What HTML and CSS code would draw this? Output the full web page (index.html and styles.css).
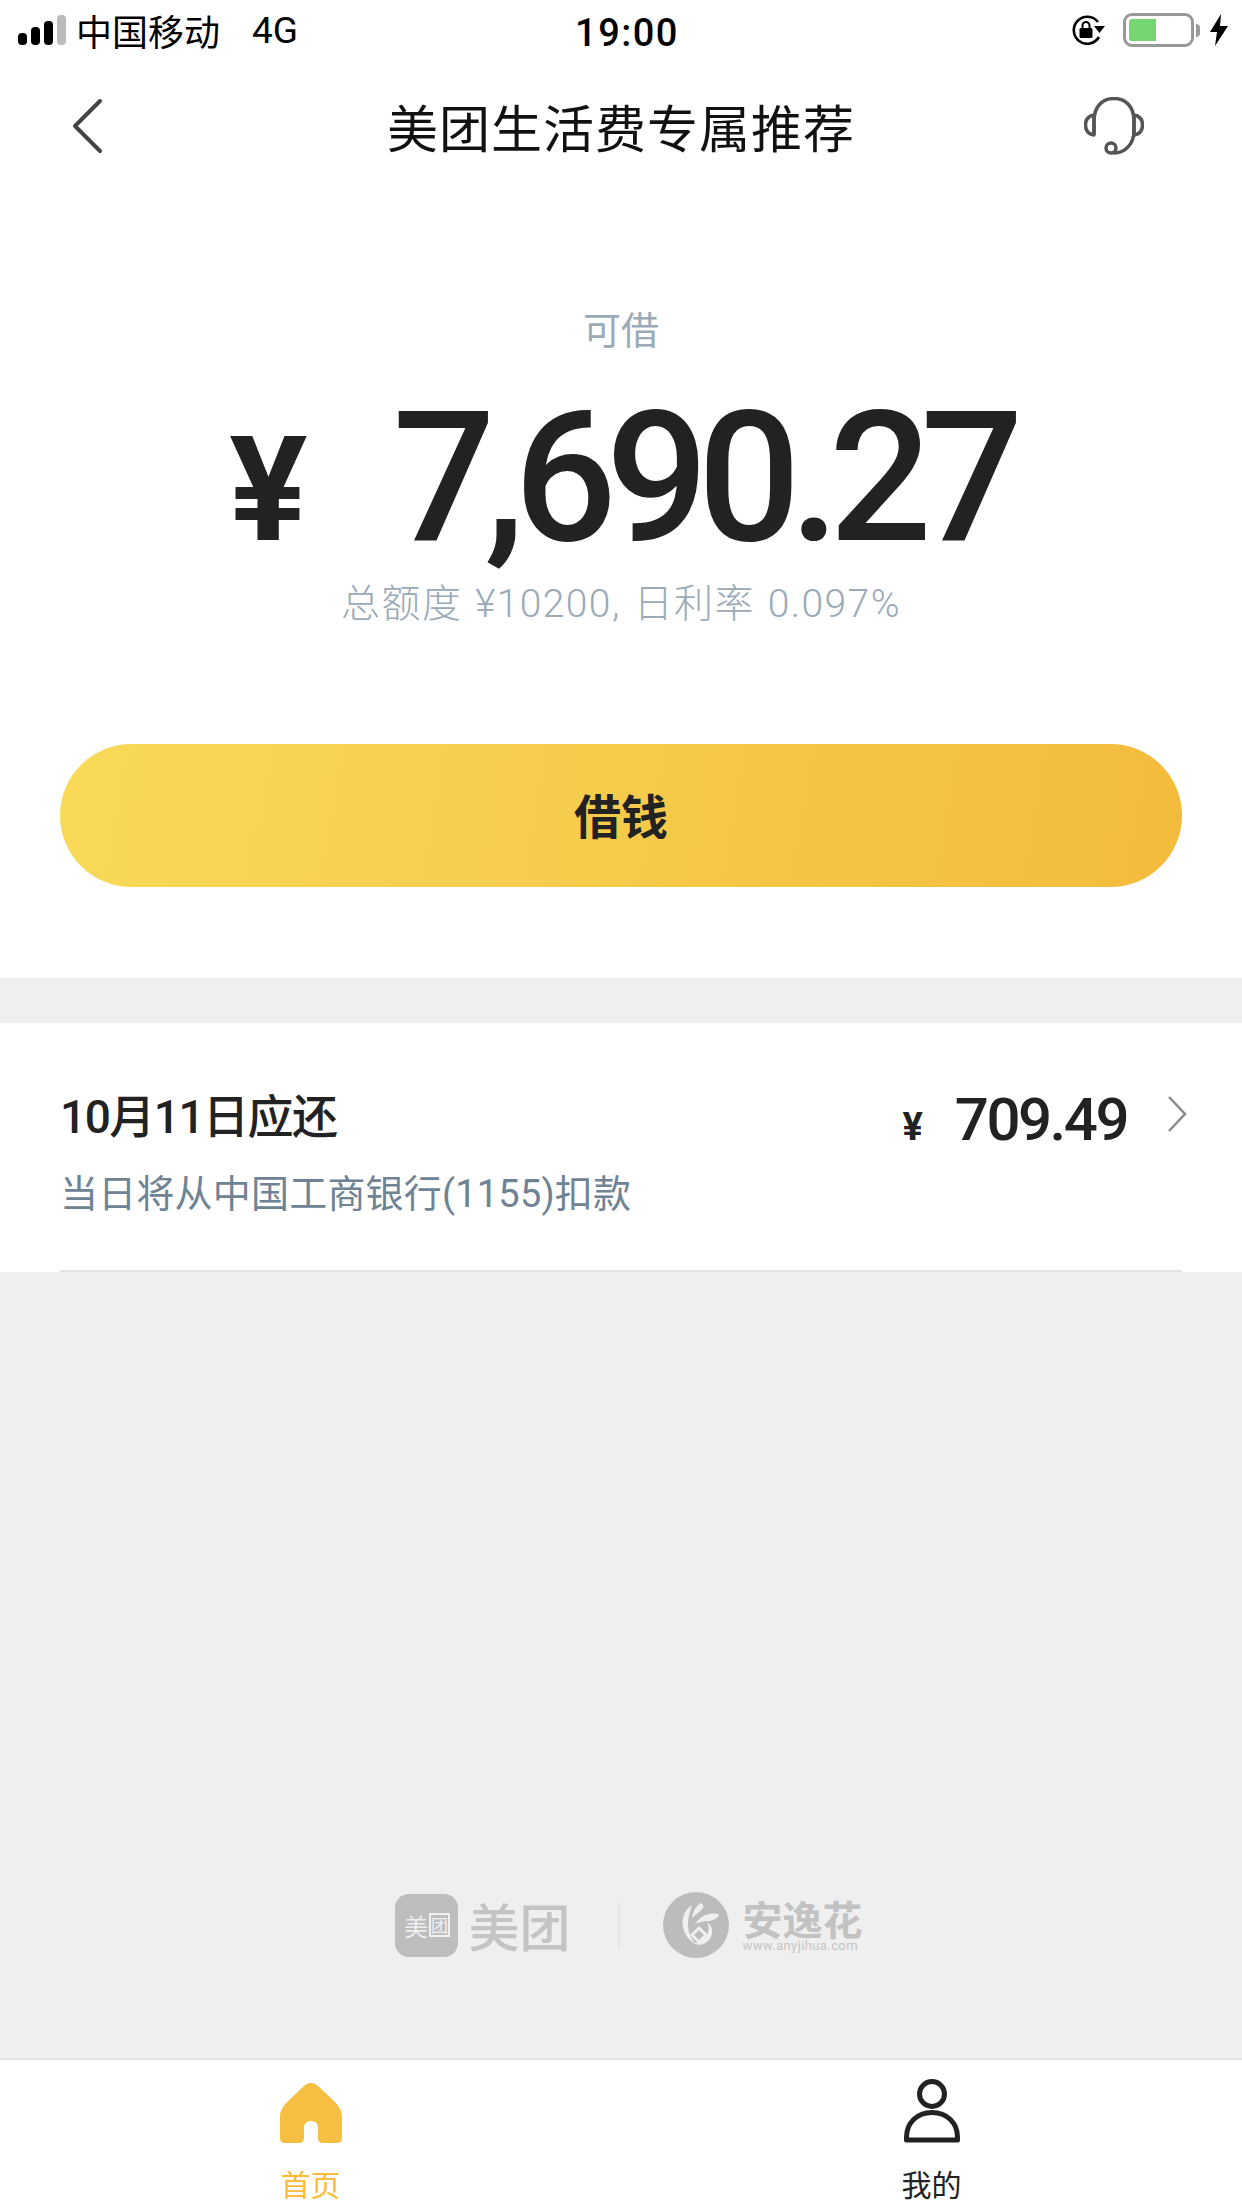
FILE: index.html

```html
<!DOCTYPE html>
<html lang="zh-CN">
<head>
  <meta charset="UTF-8">
  <meta name="viewport" content="width=device-width, initial-scale=1.0">
  <title>美团生活费专属推荐</title>
  <link rel="stylesheet" href="styles.css">
</head>
<body>
  <div class="status-bar">
    <div class="status-left">
      <div class="signal">
        <span class="bar bar-1"></span>
        <span class="bar bar-2"></span>
        <span class="bar bar-3"></span>
        <span class="bar bar-4"></span>
      </div>
      <span class="carrier">中国移动</span>
      <span class="network">4G</span>
    </div>
    <div class="time">19:00</div>
    <div class="status-right">
      <svg class="rotate-lock" viewBox="0 0 34 30" width="34" height="30">
        <path d="M27 7A13.500 13.500 0 1 0 28 22" fill="none" stroke="#000" stroke-width="2.600"/>
        <path d="M23 11h11l-5.500 7z" fill="#000"/>
        <rect x="8.500" y="13" width="13" height="10" rx="1.500" fill="#000"/>
        <path d="M11.500 14V10.500a3.500 3.500 0 0 1 7 0V14" fill="none" stroke="#000" stroke-width="2"/>
      </svg>
      <div class="battery">
        <div class="battery-body"><div class="battery-fill"></div></div>
        <div class="battery-nub"></div>
      </div>
      <svg class="bolt" viewBox="0 0 18 32" width="18" height="32">
        <path d="M11 0L0 18h7L5 32 18 12h-8z" fill="#000"/>
      </svg>
    </div>
  </div>

  <div class="nav">
    <svg class="back" viewBox="0 0 32 56" width="32" height="56">
      <path d="M29 3L4 28l25 25" fill="none" stroke="#444" stroke-width="4" stroke-linecap="round" stroke-linejoin="round"/>
    </svg>
    <h1>美团生活费专属推荐</h1>
    <svg class="headset" viewBox="0 0 60 58" width="60" height="58">
      <path d="M10 36V24C10 10 18 1.500 30 1.500S50 10 50 24v10C50 47 41 56 30 56" fill="none" stroke="#555" stroke-width="3.500" stroke-linecap="round"/>
      <path d="M10 18C4 19 1.500 23 1.500 28S4 37 10 38z" fill="none" stroke="#555" stroke-width="3.500" stroke-linejoin="round"/>
      <path d="M50 18c6 1 8.500 5 8.500 10S56 37 50 38z" fill="none" stroke="#555" stroke-width="3.500" stroke-linejoin="round"/>
      <circle cx="27" cy="51" r="5" fill="none" stroke="#555" stroke-width="3.500"/>
    </svg>
  </div>

  <div class="hero">
    <div class="hero-label">可借</div>
    <div class="hero-amount"><span class="yen">¥</span><span class="digits">7,690.27</span></div>
    <div class="hero-sub">总额度 ¥10200, 日利率 0.097%</div>
    <button class="borrow">借钱</button>
  </div>

  <div class="gap"></div>

  <div class="repay">
    <div class="repay-inner">
      <div class="repay-text">
        <div class="repay-date">10月11日应还</div>
        <div class="repay-note">当日将从中国工商银行(1155)扣款</div>
      </div>
      <div class="repay-amount">
        <span class="repay-yen">¥</span>
        <span class="repay-num">709.49</span>
        <svg class="chevron" viewBox="0 0 20 36" width="20" height="36">
          <path d="M2 1l16 17L2 35" fill="none" stroke="#8a8a8a" stroke-width="2.500"/>
        </svg>
      </div>
    </div>
  </div>

  <div class="filler">
    <div class="brands">
      <div class="mt-app"><span>美</span><span class="mt-box">团</span></div>
      <div class="mt-word">美团</div>
      <div class="brand-line"></div>
      <svg class="ayh-logo" viewBox="0 0 66 66" width="66" height="66">
        <circle cx="33" cy="33" r="33" fill="#bcbcbc"/>
        <path d="M29 13c-7 5-11 13-9 22 1 7 6 13 12 17-4-6-7-12-7-19 0-8 2-14 4-20z" fill="#f0f0f0"/>
        <path d="M38 11c-5 3-8 8-9 15 3-3 8-6 11-10 1-2 0-4-2-5z" fill="#f0f0f0"/>
        <path d="M56 22c-9-2-18 1-24 10 6-3 11-3 15-3 4-1 8-3 9-7z" fill="#f0f0f0"/>
        <path d="M44 30c6 4 7 12 2 18-4 5-11 6-16 3 7 0 13-4 15-10 1-4 1-8-1-11z" fill="#f0f0f0"/>
        <path d="M36 36l7 7-7 7-7-7z" fill="none" stroke="#f0f0f0" stroke-width="3"/>
      </svg>
      <div class="ayh-word">
        <div class="ayh-name">安逸花</div>
        <div class="ayh-url">www.anyjihua.com</div>
      </div>
    </div>
  </div>

  <div class="tabbar">
    <div class="tab tab-active">
      <svg viewBox="0 0 62 60" width="62" height="60">
        <path fill-rule="evenodd" fill="#f7bf42" d="M31 0c-3 0-5 1-7 3L8 18C3 23 0 28 0 34v21c0 3 2 5 5 5h14c3 0 5-2 5-5V45c0-5 3-7 7-7s7 2 7 7v10c0 3 2 5 5 5h14c3 0 5-2 5-5V34c0-6-3-11-8-16L38 3c-2-2-4-3-7-3z"/>
      </svg>
      <span>首页</span>
    </div>
    <div class="tab">
      <svg viewBox="0 0 56 64" width="56" height="64">
        <circle cx="28" cy="15" r="12.500" fill="none" stroke="#222" stroke-width="5"/>
        <path d="M2.500 61V58C2.500 44 13 33.500 28 33.500S53.500 44 53.500 58v3z" fill="none" stroke="#222" stroke-width="5" stroke-linejoin="round"/>
      </svg>
      <span>我的</span>
    </div>
  </div>
</body>
</html>
```

FILE: styles.css

```css
* {
  box-sizing: border-box;
}
body {
  margin: 0;
  width: 1242px;
  height: 2208px;
  display: flex;
  flex-direction: column;
  background-color: #fff;
  color: #222;
  font-family: Roboto, "Noto Sans CJK SC", sans-serif;
  overflow: hidden;
}

/* status bar */
.status-bar {
  height: 60px;
  padding: 0 14px 0 18px;
  display: grid;
  grid-template-columns: 1fr auto 1fr;
  align-items: center;
  color: #000;
  font-size: 37px;
}
.status-left {
  display: flex;
  align-items: center;
}
.signal {
  display: flex;
  align-items: flex-end;
  gap: 4px;
  height: 30px;
  margin-right: 10px;
}
.bar {
  width: 9px;
  background-color: #000;
  border-radius: 4px;
}
.bar-1 { height: 12px; }
.bar-2 { height: 18px; }
.bar-3 { height: 24px; }
.bar-4 { height: 30px; background-color: #bbb; }
.carrier {
  font-family: "Noto Sans CJK SC", sans-serif;
  font-size: 36px;
  margin-right: 32px;
}
.time {
  font-size: 38px;
  font-weight: 500;
  margin-left: 8px;
  margin-top: 5px;
  letter-spacing: 1.500px;
}
.status-right {
  display: flex;
  align-items: center;
  justify-content: flex-end;
}
.battery {
  display: flex;
  align-items: center;
  margin-left: 18px;
}
.battery-body {
  width: 71px;
  height: 34px;
  border: 3px solid #999;
  border-radius: 9px;
  padding: 3px;
}
.battery-fill {
  width: 27px;
  height: 22px;
  background-color: #76d672;
  border-radius: 3px 0 0 3px;
}
.battery-nub {
  width: 4px;
  height: 13px;
  margin-left: 2px;
  background-color: #999;
  border-radius: 0 4px 4px 0;
}
.bolt {
  margin-left: 10px;
}

/* nav */
.nav {
  height: 130px;
  padding: 1px 71px 0;
  display: grid;
  grid-template-columns: 1fr auto 1fr;
  align-items: center;
}
h1 {
  margin: 0;
  font-family: "Noto Sans CJK SC", sans-serif;
  font-size: 51px;
  font-weight: 400;
  letter-spacing: 1px;
  color: #111;
}
.headset {
  justify-self: end;
  margin-right: 27px;
}

/* hero */
.hero {
  padding: 116px 60px 91px;
  display: flex;
  flex-direction: column;
  align-items: center;
}
.hero-label {
  font-size: 38px;
  line-height: 50px;
  color: #9aaab7;
}
.hero-amount {
  margin-top: 32px;
  height: 180px;
  display: flex;
  align-items: baseline;
  line-height: 180px;
}
.yen {
  font-size: 146px;
  font-weight: 700;
  margin-right: 85px;
}
.digits {
  font-size: 181px;
  font-weight: 500;
  letter-spacing: -11px;
}
.hero-sub {
  margin-top: 11px;
  font-size: 39px;
  font-weight: 300;
  line-height: 50px;
  letter-spacing: 1.400px;
  word-spacing: 2px;
  color: #9aaab7;
}
.borrow {
  width: 100%;
  height: 143px;
  margin-top: 115px;
  padding-bottom: 6px;
  border: none;
  border-radius: 72px;
  background: linear-gradient(100deg, #f8da58, #f3bb3c);
  color: #222;
  font-family: "Noto Sans CJK SC", sans-serif;
  font-size: 47px;
  font-weight: 700;
}

.gap {
  height: 45px;
  background-color: #efefef;
}

/* repay row */
.repay {
  padding: 0 55px 0 60px;
}
.repay-inner {
  height: 249px;
  margin-right: 5px;
  border-bottom: 2px solid #e3e3e3;
  display: flex;
  justify-content: space-between;
  align-items: flex-start;
  padding-top: 64px;
}
.repay-date {
  font-size: 46px;
  font-weight: 500;
  line-height: 60px;
  color: #222;
  letter-spacing: -1.500px;
}
.repay-note {
  margin-top: 22px;
  font-size: 38px;
  line-height: 50px;
  letter-spacing: 0.200px;
  color: #6e8494;
}
.repay-amount {
  display: flex;
  align-items: baseline;
  margin-right: -5px;
  margin-top: -3px;
  height: 60px;
}
.repay-yen {
  font-size: 38px;
  font-weight: 700;
  margin-right: 32px;
}
.repay-num {
  font-size: 60px;
  font-weight: 500;
  letter-spacing: -2.500px;
}
.chevron {
  margin-left: 40px;
  align-self: flex-start;
  margin-top: 12px;
}

/* grey area with logos */
.filler {
  flex: 1;
  background-color: #efefef;
  display: flex;
  align-items: flex-end;
  justify-content: center;
  padding-bottom: 100px;
}
.brands {
  display: flex;
  align-items: center;
  height: 66px;
  margin-left: 16px;
}
.mt-app {
  width: 63px;
  height: 63px;
  border-radius: 14px;
  background-color: #bdbdbd;
  color: #f0f0f0;
  font-family: "Noto Sans CJK SC", sans-serif;
  font-size: 24px;
  display: flex;
  align-items: center;
  justify-content: center;
}
.mt-box {
  border: 2px solid #f0f0f0;
  font-size: 17px;
  line-height: 20px;
  margin-left: 1px;
}
.mt-word {
  margin-left: 10px;
  font-family: "Noto Sans CJK SC", sans-serif;
  font-size: 51px;
  font-weight: 500;
  line-height: 56px;
  color: #c4c4c4;
}
.brand-line {
  width: 2px;
  height: 46px;
  margin: 0 43px 0 47px;
  background-color: #e5e5e5;
}
.ayh-word {
  margin-left: 14px;
}
.ayh-name {
  font-family: "Noto Sans CJK SC", sans-serif;
  font-size: 40px;
  font-weight: 700;
  line-height: 42px;
  color: #c2c2c2;
}
.ayh-url {
  font-size: 13px;
  line-height: 14px;
  color: #c6c6c6;
  letter-spacing: 0.400px;
}

/* bottom tabs */
.tabbar {
  height: 150px;
  border-top: 2px solid #e2e2e2;
  display: grid;
  grid-template-columns: 1fr 1fr;
}
.tab {
  display: flex;
  flex-direction: column;
  align-items: center;
  justify-content: flex-end;
  padding-bottom: 3px;
  height: 148px;
  color: #222;
  font-family: "Noto Sans CJK SC", sans-serif;
  font-size: 30px;
  line-height: 44px;
}
.tab span {
  margin-top: 18px;
}
.tab-active {
  color: #fcbc36;
}
```
